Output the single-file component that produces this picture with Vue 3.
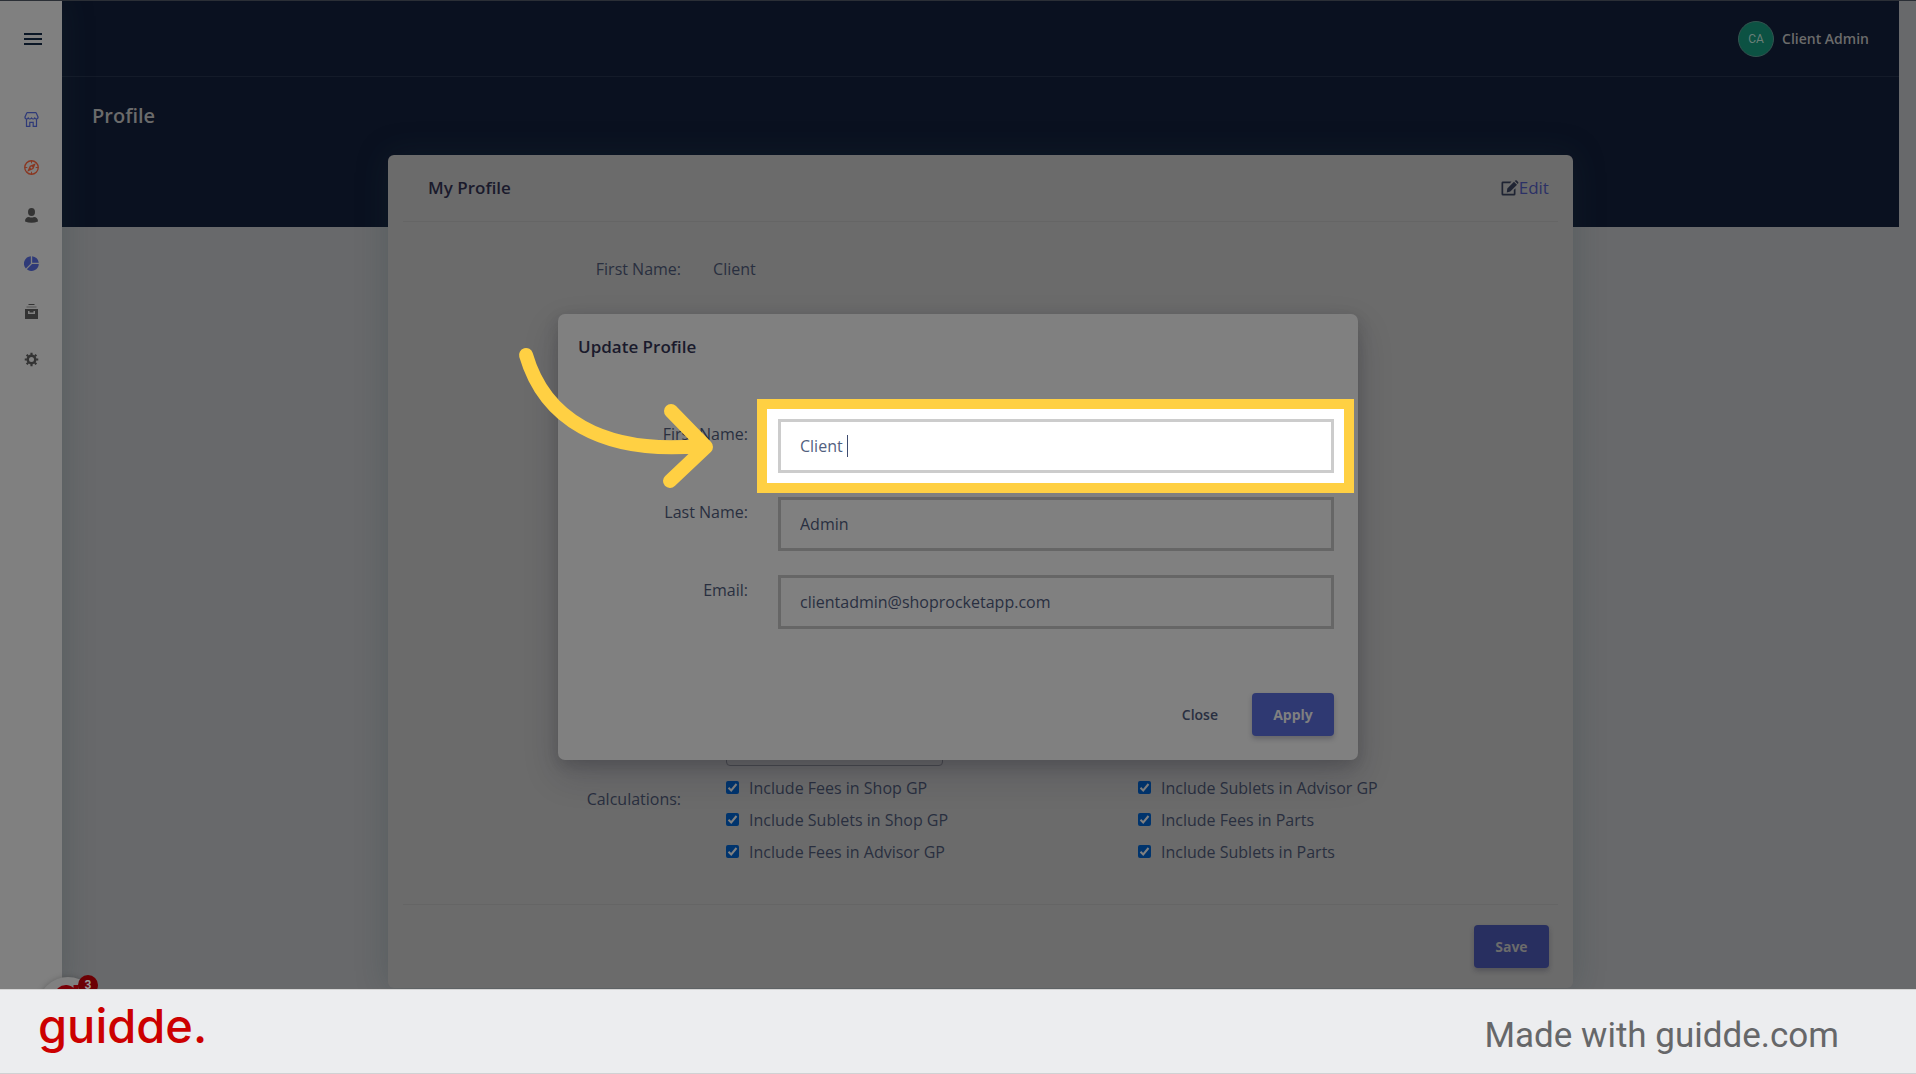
<script setup>
import { ref } from 'vue'

const firstName = ref('Client')
const lastName = ref('Admin')
const email = ref('clientadmin@shoprocketapp.com')

const calculations = ref([
  { id: 'fees-shop', label: 'Include Fees in Shop GP', on: true },
  { id: 'sublets-advisor', label: 'Include Sublets in Advisor GP', on: true },
  { id: 'sublets-shop', label: 'Include Sublets in Shop GP', on: true },
  { id: 'fees-parts', label: 'Include Fees in Parts', on: true },
  { id: 'fees-advisor', label: 'Include Fees in Advisor GP', on: true },
  { id: 'sublets-parts', label: 'Include Sublets in Parts', on: true },
])
</script>

<template>
  <div class="page">
    <div class="stage">
      <nav class="sidebar" aria-label="Main">
        <button class="menu" type="button" aria-label="Menu">
          <span></span><span></span><span></span>
        </button>
        <ul class="links">
          <li>
            <a href="#" aria-label="Shops">
              <svg width="15" height="15" viewBox="0 0 15 15" fill="none" stroke="#2f3a78" stroke-width="1.200">
                <path d="M3 .6h9M3 .6 1 5v1.500M12 .6l2 4.400v1.500M1 5.500q.5 1.500 1.600 1.500t1.600-1q.6 1 1.600 1t1.700-1q.6 1 1.700 1t1.600-1q.6 1 1.600 1T14 5.500M2.500 7.500v6.900h3.300v-4h3.400v4h3.300V7.500" />
              </svg>
            </a>
          </li>
          <li>
            <a href="#" aria-label="Explore">
              <svg width="15" height="15" viewBox="0 0 16 16" fill="none" stroke="#8a3620">
                <circle cx="8" cy="8" r="7.200" stroke-width="1.400" />
                <path d="M8 1v2.500M8 12.500V15M1 8h2.500M12.500 8H15" />
                <path fill="#8a3620" fill-rule="evenodd" stroke="none" d="M12.600 3.400 10 9.600 3.400 12.600 6.200 6.200zM8 6.900a1.100 1.100 0 1 0 .01 0z" />
              </svg>
            </a>
          </li>
          <li>
            <a href="#" aria-label="Customers">
              <svg width="15" height="15" viewBox="0 0 15 15" fill="#333">
                <ellipse cx="7.500" cy="4" rx="3.500" ry="4" />
                <path d="M1 13.500c0-3 1.500-4.500 4-4.500 1.500.8 3.500.8 5 0 2.500 0 4 1.500 4 4.500q-6.500 2.500-13 0z" />
              </svg>
            </a>
          </li>
          <li>
            <a href="#" aria-label="Reports">
              <svg width="15" height="15" viewBox="0 0 16 16" fill="#2f3a78">
                <path d="M7.300.2v7.700L2 13.200A7.800 7.800 0 0 1 7.300.2zM8.700.2a7.800 7.800 0 0 1 7.100 7H8.700zM15.800 8.500A7.800 7.800 0 0 1 3 14.100l5.600-5.600z" />
              </svg>
            </a>
          </li>
          <li>
            <a href="#" aria-label="Archive">
              <svg width="15" height="15" viewBox="0 0 15 15" fill="#333">
                <path d="M4.500 0h6v1h-6z" />
                <path fill="#555" d="M2.500 2.500h10v1h-10z" />
                <path fill-rule="evenodd" d="M1 5h13v10H1zM4 7v3h7V7H9.500v1.500h-4V7z" />
              </svg>
            </a>
          </li>
          <li>
            <a href="#" aria-label="Settings">
              <svg width="15" height="15" viewBox="0 0 14 14" fill="none" stroke="#333">
                <circle cx="7" cy="7" r="3.500" stroke-width="2.300" />
                <path stroke-width="2" d="M7 .7v2M7 11.300v2M.7 7h2M11.300 7h2M2.500 2.500l1.400 1.400M10.100 10.100l1.400 1.400M11.500 2.500l-1.400 1.400M3.900 10.100l-1.400 1.400" />
              </svg>
            </a>
          </li>
        </ul>
      </nav>

      <main class="main">
        <header class="hero">
          <div class="topbar">
            <span class="avatar">CA</span>
            <span class="user">Client Admin</span>
          </div>
          <h1>Profile</h1>
        </header>

        <section class="card">
          <div class="card-head">
            <h2>My Profile</h2>
            <a class="edit" href="#">
              <svg width="18" height="16" viewBox="0 0 18 16" fill="#1f2433">
                <path d="M1.500 1.500h9L9 3.200H2.200v10.600h10.600V10l1.700-1.700v5.700q0 1.500-1.500 1.500H2Q.5 15.500.5 14V3q0-1.500 1-1.500z" />
                <path d="M13 1.800 16 4.800 9.300 11.500l-3.500.9.500-3.800zM13.800 1q1-1.300 2-.4l1.300 1.300q.9 1-.4 2z" />
              </svg>
              <span>Edit</span>
            </a>
          </div>

          <div class="card-body">
            <dl class="row">
              <dt class="label">First Name:</dt>
              <dd>Client</dd>
            </dl>
            <div class="row settings">
              <span class="label calc-label">Calculations:</span>
              <div class="options">
                <select aria-label="Period"></select>
                <div class="checks">
                  <label v-for="item in calculations" :key="item.id">
                    <input v-model="item.on" type="checkbox" />
                    <span>{{ item.label }}</span>
                  </label>
                </div>
              </div>
            </div>
          </div>

          <div class="card-foot">
            <button class="btn save" type="button">Save</button>
          </div>
        </section>
      </main>

      <div class="bubble">
        <svg width="24" height="24" viewBox="0 0 24 24" fill="none" stroke="#780007" stroke-width="5">
          <path d="M18 7A9 9 0 1 0 18 18M21 1v10" />
        </svg>
        <span class="count">3</span>
      </div>

      <div class="overlay">
        <form class="modal" role="dialog" aria-label="Update Profile" @submit.prevent>
          <h2>Update Profile</h2>
          <div class="fields">
            <div class="field">
              <label for="first">First Name:</label>
              <div class="control active">
                <input id="first" v-model="firstName" type="text" />
                <i class="caret"></i>
              </div>
            </div>
            <div class="field">
              <label for="last">Last Name:</label>
              <div class="control"><input id="last" v-model="lastName" type="text" /></div>
            </div>
            <div class="field">
              <label for="email">Email:</label>
              <div class="control"><input id="email" v-model="email" type="text" /></div>
            </div>
          </div>
          <div class="actions">
            <button class="btn close" type="button">Close</button>
            <button class="btn apply" type="submit">Apply</button>
          </div>
          <svg class="arrow" width="200" height="150" viewBox="0 0 200 150" fill="none" stroke="#ffd043" stroke-width="14" stroke-linecap="round" stroke-linejoin="round">
            <path d="M10 12C28 74 84 112 184 103M155 68l35 36-36 34" />
          </svg>
        </form>
      </div>
    </div>

    <footer class="brand">
      <span class="logo">guidde.</span>
      <span class="made">Made with guidde.com</span>
    </footer>
  </div>
</template>

<style>
body {
  margin: 0;
}
</style>

<style scoped>
* {
  box-sizing: border-box;
}

.page {
  min-height: 100vh;
  display: flex;
  flex-direction: column;
  font: 400 16px/24px "Open Sans", "Noto Sans", sans-serif;
  color: #292f3f;
  background: #68696b;
}

h1,
h2,
dl,
dd,
ul {
  margin: 0;
  padding: 0;
}

.stage {
  position: relative;
  flex: 1;
  display: flex;
  padding-right: 17px;
  border-top: 1px solid #2b2f36;
  overflow: hidden;
}

.sidebar {
  position: relative;
  z-index: 1;
  flex: none;
  width: 62px;
  background: #808080;
  box-shadow: 0 0 32px rgba(30, 55, 60, 0.25);
}

.menu {
  display: flex;
  flex-direction: column;
  gap: 3px;
  width: 18px;
  margin: 32px 0 0 24px;
  padding: 0;
  border: 0;
  background: none;
}

.menu span {
  height: 2px;
  background: #0b1726;
}

.links {
  margin-top: 50px;
  list-style: none;
}

.links a {
  display: flex;
  align-items: center;
  justify-content: center;
  height: 48px;
  padding-left: 1px;
}

.main {
  flex: 1;
  min-width: 0;
  display: flex;
  flex-direction: column;
  align-items: center;
}

.hero {
  width: 100%;
  height: 226px;
  background: #0a1120;
}

.topbar {
  display: flex;
  align-items: center;
  justify-content: flex-end;
  gap: 8px;
  height: 76px;
  padding: 0 30px;
  border-bottom: 1px solid #141b29;
}

.avatar {
  width: 36px;
  height: 36px;
  border: 1px solid #33534f;
  border-radius: 50%;
  background: #0c5243;
  color: #6b7f79;
  font: 400 12px/34px Roboto, sans-serif;
  text-align: center;
}

.user {
  color: #6b6b6b;
  font-size: 14px;
  font-weight: 600;
}

h1 {
  padding: 27px 30px;
  color: #6b6b6b;
  font-size: 20px;
  line-height: 24px;
  font-weight: 600;
}

h2 {
  color: #1a1a2c;
  font-size: 17px;
  line-height: 24px;
  font-weight: 600;
}

.card {
  position: relative;
  width: 64.5%;
  margin-top: -72px;
  padding: 0 15px;
  border-radius: 6px;
  background: #6b6b6b;
  box-shadow: 0 0 32px rgba(30, 55, 60, 0.25);
}

.card-head {
  display: flex;
  justify-content: space-between;
  padding: 21px 9px 21px 25px;
  border-bottom: 1px solid #656565;
}

.edit {
  display: flex;
  align-items: center;
  color: #2c3166;
  font-size: 17px;
  font-weight: 600;
  text-decoration: none;
}

.edit span {
  font-weight: 500;
}

.card-body {
  padding: 35px 0 40px;
}

.row {
  display: flex;
  gap: 32px;
}

.label {
  flex: none;
  width: 278px;
  text-align: right;
}

.settings {
  gap: 45px;
  margin-top: 439px;
}

.calc-label {
  padding-top: 67px;
}

.options {
  flex: 1;
}

select {
  display: block;
  width: 217px;
  height: 46px;
  border: 1px solid #4b4c50;
  border-radius: 4px;
  background: #6b6b6b;
  appearance: none;
}

.checks {
  display: grid;
  grid-template-columns: 1fr 1fr;
  row-gap: 8px;
  margin-top: 10px;
  padding-right: 8px;
}

.checks label {
  display: flex;
  align-items: center;
  gap: 10px;
}

.checks input {
  width: 13px;
  height: 13px;
  margin: 0 0 2px;
  flex: none;
  appearance: none;
  border-radius: 2px;
  background: #00346d;
}

.checks input:checked {
  background: #00346d url("data:image/svg+xml,%3Csvg xmlns='http://www.w3.org/2000/svg' viewBox='0 0 13 13'%3E%3Cpath d='M2.500 6.800 5.200 9.500 10.500 3' fill='none' stroke='%23808080' stroke-width='2'/%3E%3C/svg%3E");
}

.card-foot {
  display: flex;
  justify-content: flex-end;
  padding: 20px 9px;
  border-top: 1px solid #656565;
}

.btn {
  min-width: 75px;
  height: 43px;
  padding: 0 20px;
  border: 0;
  border-radius: 4px;
  font: 600 14px/24px "Open Sans", "Noto Sans", sans-serif;
}

.save,
.apply {
  font-weight: 700;
  box-shadow: 0 3px 5px rgba(20, 20, 40, 0.25);
}

.save {
  background: #282f60;
  color: #6b6b6b;
}

.apply {
  min-width: 82px;
  background: #2f3972;
  color: #808080;
}

.close {
  background: none;
  color: #292f40;
}

.bubble {
  position: absolute;
  z-index: 2;
  left: 38px;
  bottom: -48px;
  width: 60px;
  height: 60px;
  padding: 7px 17px;
  border-radius: 50%;
  background: #808080;
  box-shadow: 0 1px 6px rgba(0, 0, 0, 0.3);
}

.count {
  position: absolute;
  top: -2px;
  right: 0;
  width: 20px;
  height: 20px;
  border-radius: 50%;
  background: #6c0004;
  color: #999;
  font: 700 12px/20px Roboto, sans-serif;
  text-align: center;
}

.overlay {
  position: absolute;
  inset: 0;
  z-index: 3;
  display: flex;
  justify-content: center;
  align-items: flex-start;
  padding-top: 313px;
}

.modal {
  position: relative;
  width: 800px;
  padding: 20px 24px 24px 20px;
  border-radius: 7px;
  background: #808080;
  box-shadow: 0 15px 35px rgba(25, 25, 47, 0.2), 0 5px 15px rgba(0, 0, 0, 0.15);
}

.modal h2 {
  margin-top: 1px;
}

.fields {
  display: flex;
  flex-direction: column;
  gap: 24px;
  margin-top: 60px;
}

.field {
  display: flex;
  gap: 30px;
}

.field label {
  width: 170px;
  padding-top: 3px;
  text-align: right;
}

.control {
  position: relative;
  flex: 1;
}

.control input {
  position: relative;
  display: block;
  width: 100%;
  height: 54px;
  padding: 0 19px;
  border: 3px solid #666;
  border-radius: 0;
  background: transparent;
  color: #292f40;
  font: inherit;
}

.active::before {
  content: "";
  position: absolute;
  inset: -20px -20px -20px -21px;
  border: 10px solid #ffd043;
  background: #fff;
}

.active input {
  border-color: #ccc;
  color: #525f7f;
}

.caret {
  position: absolute;
  left: 69px;
  top: 16px;
  width: 1px;
  height: 22px;
  background: #3f4c70;
}

.actions {
  display: flex;
  justify-content: flex-end;
  gap: 14px;
  margin-top: 64px;
}

.arrow {
  position: absolute;
  left: -42px;
  top: 29px;
}

.brand {
  flex: none;
  display: flex;
  align-items: center;
  justify-content: space-between;
  height: 85px;
  padding: 8px 77px 0 38px;
  border-top: 1px solid #d4d4d4;
  border-bottom: 1px solid #d0d1d3;
  background: #ecedef;
}

.logo {
  color: #c00;
  font: 500 47px/56px Inter, sans-serif;
  padding-bottom: 20px;
}

.made {
  color: #666769;
  font: 400 35px/48px Roboto, sans-serif;
}
</style>
